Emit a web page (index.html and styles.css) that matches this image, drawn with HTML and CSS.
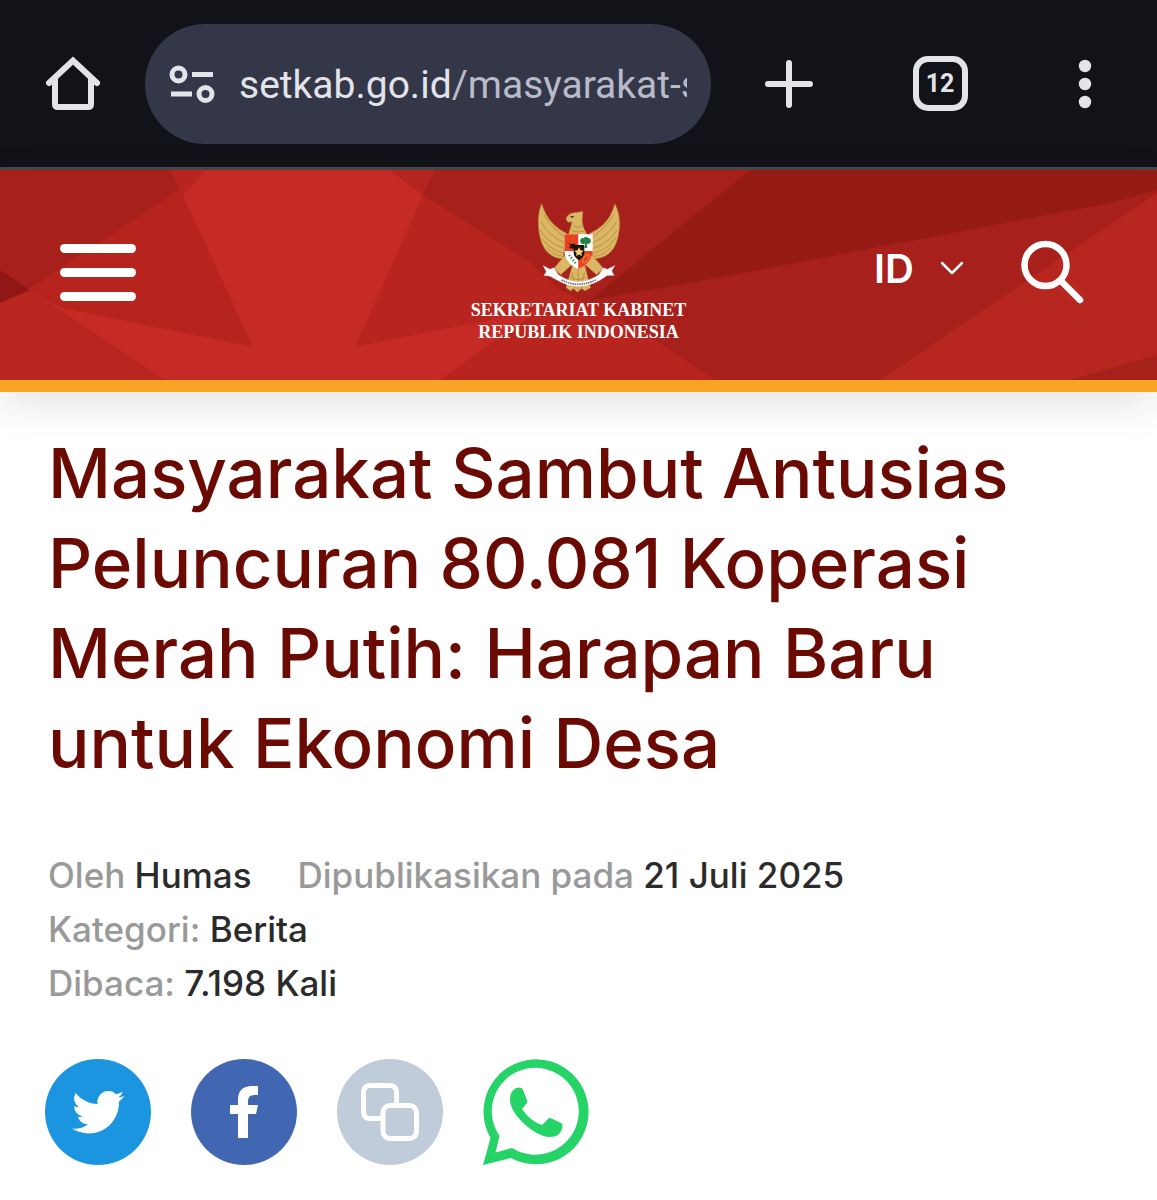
FILE: index.html
```html
<!DOCTYPE html>
<html lang="id">
<head>
<meta charset="utf-8">
<meta name="viewport" content="width=device-width, initial-scale=1">
<title>Masyarakat Sambut Antusias Peluncuran 80.081 Koperasi Merah Putih</title>
<link rel="stylesheet" href="styles.css">
</head>
<body>
<div class="browser-bar">
  <button class="icon-button" type="button" aria-label="Beranda">
    <svg width="56" height="56" viewBox="0 0 56 56" fill="none" stroke="currentColor" stroke-width="6" stroke-linecap="round" stroke-linejoin="round"><path d="M4 27 28 4.500 52 27" stroke-linejoin="miter"/><path d="M10 23V48Q10 51 13 51H43Q46 51 46 48V23"/></svg>
  </button>
  <div class="address">
    <svg class="address-icon" width="46" height="38" viewBox="0 0 46 38" fill="none" stroke="currentColor" stroke-width="5"><circle cx="9.500" cy="9.500" r="6.500"/><circle cx="36.500" cy="29" r="6.500"/><path d="M23 9.500H44M2 29H23"/></svg>
    <div class="url">setkab.go.id<span class="url-path">/masyarakat-s</span></div>
  </div>
  <button class="icon-button" type="button" aria-label="Tab baru">
    <svg width="50" height="50" viewBox="0 0 50 50" fill="none" stroke="currentColor" stroke-width="6" stroke-linecap="round"><path d="M25 4V46M4 25H46"/></svg>
  </button>
  <button class="icon-button" type="button" aria-label="12 tab"><span class="tab-count">12</span></button>
  <button class="icon-button" type="button" aria-label="Menu browser">
    <svg width="14" height="50" viewBox="0 0 14 50" fill="currentColor"><circle cx="7" cy="7" r="6.200"/><circle cx="7" cy="25" r="6.200"/><circle cx="7" cy="43" r="6.200"/></svg>
  </button>
</div>

<header class="site-header">
  <svg class="header-art" viewBox="0 170 1157 210" preserveAspectRatio="none" aria-hidden="true">
    <path fill="#a7201b" d="M0 170H1157V380H0z"/>
    <path fill="#c52b24" d="M205 170H390L423 195 380 330 480 320 540 310 440 380H160L30 290 150 320 183 195z"/>
    <path fill="#901713" d="M0 270 30 290 0 303z"/>
    <path fill="#b8261f" d="M0 303 30 290 165 380H0z"/>
    <path fill="#b7251e" d="M170 170H205L183 195z"/>
    <path fill="#b7241d" d="M183 187 28 290 62 308 253 347 183 195z"/>
    <path fill="#b5251f" d="M390 170H435L423 195z"/>
    <path fill="#b7251e" d="M423 195 530 262 560 290 640 330 715 380H440L520 325 540 310 480 322 355 347z"/>
    <path fill="#961b14" d="M750 170H1157V190L1110 203 680 285 590 300z"/>
    <path fill="#b7261f" d="M1157 193 880 380H1157z"/>
    <path fill="#a5211a" d="M1157 355 1070 380H1157z"/>
  </svg>
  <button class="menu-button" type="button" aria-label="Menu"><span></span><span></span><span></span></button>
  <a class="brand" href="#">
    <svg width="84" height="90" viewBox="0 0 110 118" aria-hidden="true">
      <g fill="#dbb765" stroke="#b58a3d" stroke-width=".8">
        <path d="M6 1C2 11 1 22 2 32C3 43 5 51 9 58C14 67 23 73 34 73L39 40C27 34 13 24 6 1z"/>
        <path d="M102 1C107 11 109 22 108 32C107 43 105 51 101 58C96 67 86 73 74 73L69 40C82 34 96 24 102 1z"/>
        <path d="M38 20Q41 14 47 13L60 11 59 24Q60 33 66 42H41L46 25 40 25z"/>
        <path d="M37 68 22 86 31 94 41 85 47 80 38 111 44 115 48 112 53 117 58 112 63 115 70 111 62 80 69 86 78 94 87 86 72 68z"/>
      </g>
      <g fill="none" stroke="#b18435" stroke-width="1">
        <path d="M9 15Q19 33 38 46M5 25Q14 42 37 53M4 35Q12 51 36 60M6 46Q15 60 35 66M12 58Q22 69 34 70"/>
        <path d="M100 15Q90 33 71 46M104 25Q95 42 72 53M105 35Q97 51 73 60M103 46Q94 60 74 66M97 58Q87 69 75 70"/>
        <path d="M46 91 50 112M54 86V115M62 91 58 112M44 97Q54 104 64 97M48 30Q54 34 60 30M46 36Q54 40 63 36"/>
      </g>
      <path fill="#4a2b12" d="M44 17h4v2h-4z"/>
      <path fill="#fff" d="M36 41H73V64Q72 79 54 87Q37 79 36 64z"/>
      <path fill="#e8431f" d="M36 41H54V63H36zM54 63H73Q72 79 54 87z"/>
      <path fill="#21140f" d="M39 50 43 54 50 53 48 60 42 59 44 56zM48 55H62V66Q61 72 55 75Q49 72 48 66z"/>
      <path fill="#23824a" d="M57 52Q55 46 61 46 64 43 67 46 72 47 70 52 66 55 65 53L66 59H62L63 53Q59 55 57 52z"/>
      <path fill="#f5d36c" d="m55 58 2 4 4 .5-3 3 1 4-4-2-4 2 1-4-3-3 4-.5z"/>
      <ellipse cx="64" cy="73" rx="3" ry="6" fill="none" stroke="#f0803c" stroke-width="1.500" transform="rotate(35 64 73)"/>
      <path d="M42 68 51 80" stroke="#4f8a58" stroke-width="3" stroke-dasharray="2 2"/>
      <path fill="#fff" stroke="#cfc5c5" stroke-width=".5" d="M8 82 17 87 22 85 28 94Q54 112 81 94L87 85 92 87 102 82 98 89 101 95 92 95 83 101Q54 118 26 101L17 96 9 95 12 90z"/>
      <path fill="none" stroke="#665f5f" stroke-width="2" stroke-dasharray="2 1" d="M32 101Q54 112 77 101"/>
    </svg>
    <span class="brand-name">SEKRETARIAT KABINET<br>REPUBLIK INDONESIA</span>
  </a>
  <div class="header-tools">
    <button class="language" type="button">ID
      <svg width="24" height="16" viewBox="0 0 24 16" fill="none" stroke="currentColor" stroke-width="2.500" stroke-linecap="round" stroke-linejoin="round"><path d="M2 3 12 13 22 3"/></svg>
    </button>
    <button class="search" type="button" aria-label="Cari">
      <svg width="64" height="66" viewBox="0 0 64 66" fill="none" stroke="currentColor" stroke-width="6.500" stroke-linecap="round"><circle cx="25.500" cy="26" r="21"/><path d="M41 42 60 61"/></svg>
    </button>
  </div>
</header>

<main class="article">
  <h1>Masyarakat Sambut Antusias Peluncuran 80.081 Koperasi Merah Putih: Harapan Baru untuk Ekonomi Desa</h1>
  <div class="meta">
    <div class="meta-row"><span>Oleh <a href="#">Humas</a></span><span>Dipublikasikan pada <b>21 Juli 2025</b></span></div>
    <div class="meta-row"><span>Kategori: <a href="#">Berita</a></span></div>
    <div class="meta-row"><span>Dibaca: <b>7.198 Kali</b></span></div>
  </div>
  <nav class="share" aria-label="Bagikan">
    <a href="#" aria-label="Twitter"><svg width="106" height="106" viewBox="0 0 106 106"><circle cx="53" cy="53" r="53" fill="#1b95e0"/><g transform="translate(27 27) scale(2.180)"><path fill="#fff" d="M23.950 4.570a10 10 0 0 1-2.820.770 4.960 4.960 0 0 0 2.160-2.720c-.950.550-2 .960-3.130 1.180a4.920 4.920 0 0 0-8.380 4.480C7.690 8.100 4.070 6.130 1.640 3.160a4.920 4.920 0 0 0 1.520 6.570 4.900 4.900 0 0 1-2.230-.610v.060a4.920 4.920 0 0 0 3.950 4.830 5 5 0 0 1-2.210.080 4.940 4.940 0 0 0 4.600 3.420A9.870 9.870 0 0 1 0 19.540a13.990 13.990 0 0 0 7.550 2.210c9.050 0 14-7.500 14-13.980 0-.210 0-.420-.020-.630a9.940 9.940 0 0 0 2.460-2.550z"/></g></svg></a>
    <a href="#" aria-label="Facebook"><svg width="106" height="106" viewBox="0 0 106 106"><circle cx="53" cy="53" r="53" fill="#4267b2"/><path fill="#fff" d="M47 79V55H39V46H47V41Q47 27 61 27H67V36H63Q57 36 57 42V46H67L65 55H57V79z"/></svg></a>
    <button type="button" aria-label="Salin tautan"><svg width="106" height="106" viewBox="0 0 106 106"><circle cx="53" cy="53" r="53" fill="#c0ccda"/><g fill="none" stroke="#fff" stroke-width="5"><path d="M44 59.500H33.500Q26.500 59.500 26.500 52.500V33.500Q26.500 26.500 33.500 26.500H52.500Q59.500 26.500 59.500 33.500V44"/><rect x="46" y="46.500" width="33.500" height="33" rx="7"/></g></svg></button>
    <a href="#" aria-label="WhatsApp"><svg width="106" height="106" viewBox="0 0 106 106"><path fill="#25d366" fill-rule="evenodd" d="M0 106 7.500 79A52.500 52.500 0 1 1 28 99zM12.500 93.500 29 89A43.500 43.500 0 1 0 16.500 77z"/><path fill="#25d366" d="M37 28.500Q39 28.500 40 31L44 41Q45 43 43.500 44.500L39 50Q47 62 59 66L65 60Q66.500 58.500 68.500 59.500L78 64Q80 65 79.500 68Q78 78 66 78C53 78 27 56 27 41Q27 32 33 29z"/></svg></a>
  </nav>
</main>
</body>
</html>
```
FILE: styles.css
```css
* { box-sizing: border-box; }
body {
  margin: 0;
  background: #fff;
  color: #2b2b2b;
  font-family: Inter, "Noto Sans", sans-serif;
}
button {
  padding: 0;
  border: 0;
  background: none;
  color: inherit;
  font: inherit;
}
svg { display: block; flex: none; }

.browser-bar {
  display: grid;
  grid-template-columns: 145px 1fr 156px 146px 144px;
  align-items: center;
  height: 170px;
  border-bottom: 3px solid #47474c;
  background: #121318;
  color: #e3e3ea;
}
.icon-button {
  display: grid;
  place-items: center;
}
.address {
  display: flex;
  align-items: center;
  gap: 24px;
  min-width: 0;
  height: 120px;
  padding: 0 24px;
  border-radius: 60px;
  background: #333748;
}
.url {
  flex: 1;
  overflow: hidden;
  padding-top: 3px;
  white-space: nowrap;
  font-family: Roboto, sans-serif;
  font-size: 39px;
  line-height: 56px;
}
.url-path { color: #b9bbca; }
.tab-count {
  width: 55px;
  height: 55px;
  border: 6px solid #e3e3ea;
  border-radius: 15px;
  font-family: Roboto, sans-serif;
  font-size: 25px;
  font-weight: 700;
  line-height: 43px;
}

.site-header {
  position: relative;
  display: grid;
  grid-template-columns: 1fr auto 1fr;
  align-items: center;
  height: 222px;
  padding: 0 60px 6px;
  border-bottom: 12px solid #f8a526;
  box-shadow: 0 12px 40px rgba(0, 0, 0, .11);
  color: #fff;
}
.header-art {
  position: absolute;
  inset: 0;
  z-index: -1;
  width: 100%;
  height: 100%;
}
.menu-button {
  display: grid;
  gap: 15px;
  width: 76px;
}
.menu-button span {
  height: 9px;
  border-radius: 5px;
  background: #fff;
}
.brand {
  display: grid;
  justify-items: center;
  gap: 6px;
  padding-top: 2px;
  color: #fff;
  text-decoration: none;
}
.brand-name {
  font-family: "Liberation Serif", serif;
  font-size: 18px;
  font-weight: 700;
  line-height: 22px;
  text-align: center;
}
.header-tools {
  display: flex;
  align-items: center;
  justify-content: flex-end;
  gap: 56px;
  padding-right: 13px;
}
.language {
  display: flex;
  align-items: center;
  gap: 26px;
  padding-bottom: 8px;
  font-size: 40px;
  font-weight: 600;
}

.article { padding: 36px 48px; }
h1 {
  margin: 0;
  color: #6b0a02;
  font-size: 69px;
  font-weight: 500;
  line-height: 90px;
}
.meta {
  margin-top: 60px;
  color: #999;
  font-size: 35px;
  font-weight: 500;
  line-height: 54px;
}
.meta-row {
  display: flex;
  gap: 46px;
}
.meta a, .meta b {
  color: #2b2b2b;
  font-weight: 500;
  text-decoration: none;
}
.share {
  display: flex;
  gap: 40px;
  margin: 49px -3px 0;
}
```
